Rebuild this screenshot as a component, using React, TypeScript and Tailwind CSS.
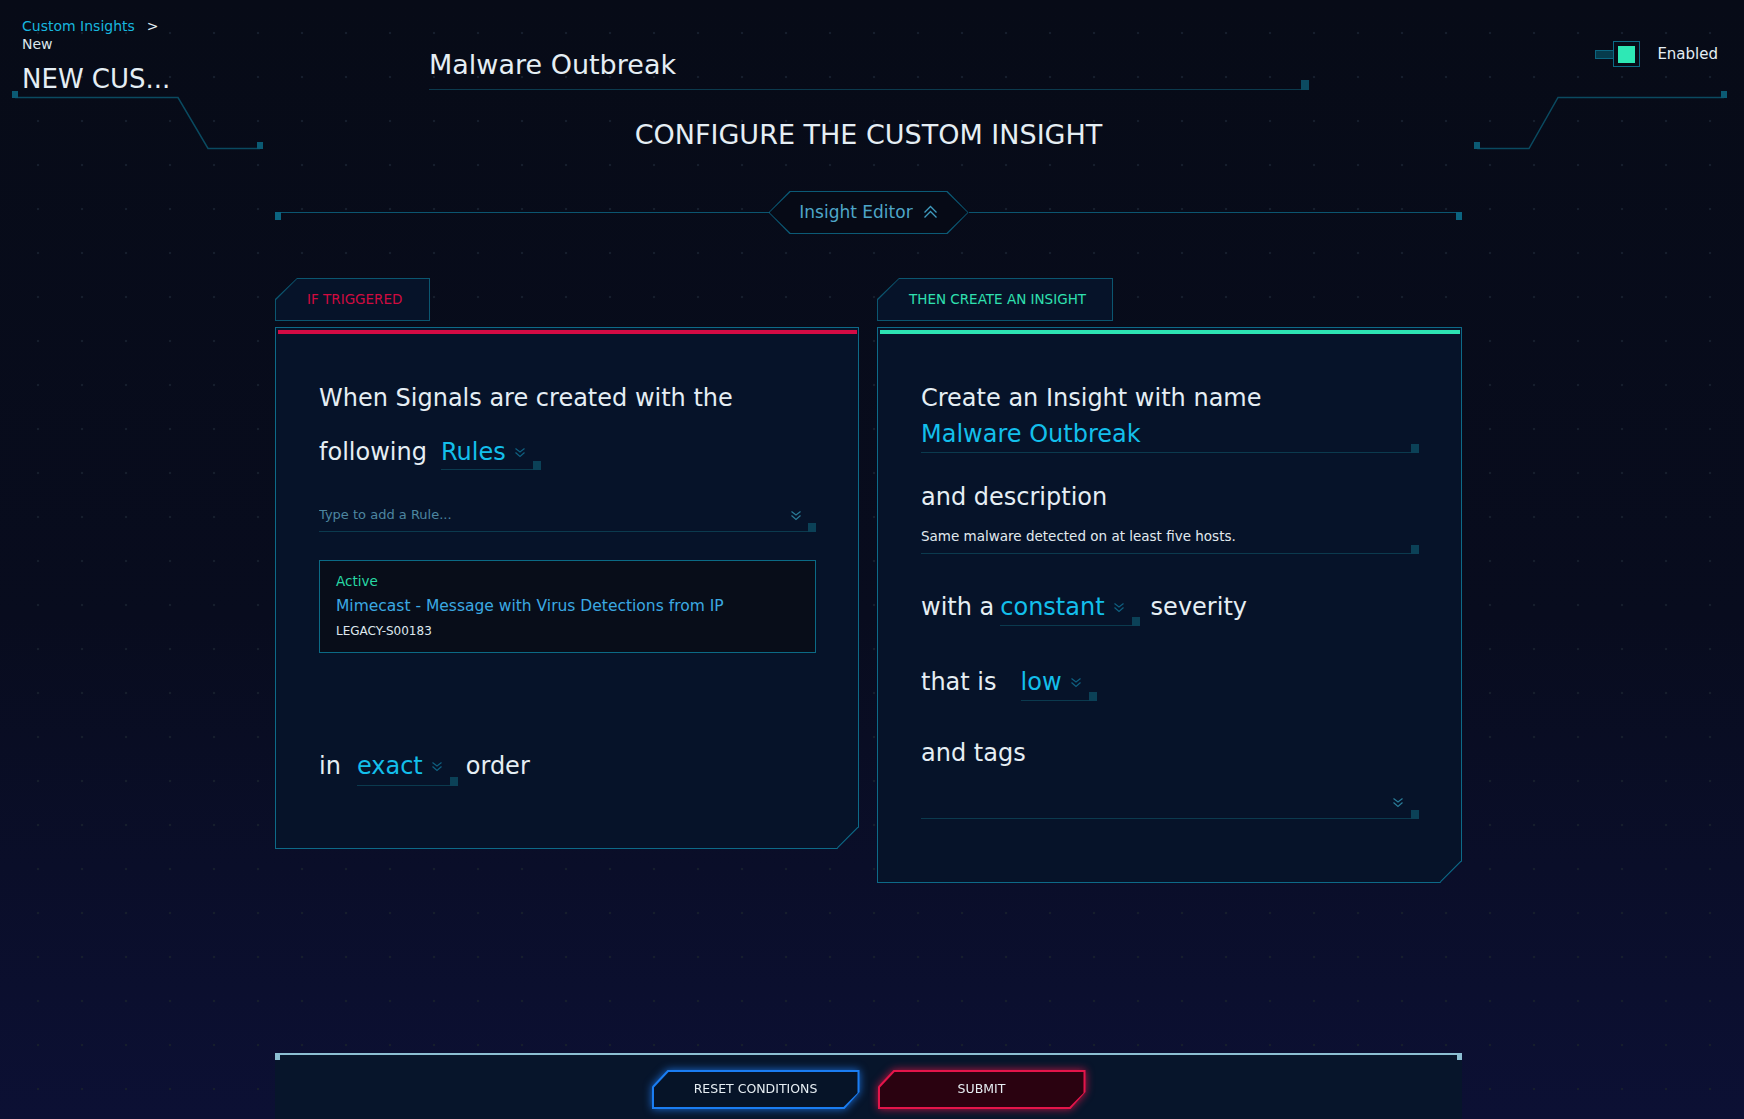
import type { ReactNode } from 'react'

const TEXT = 'text-[#e5eef4]'

function Chevrons({ className = '' }: { className?: string }) {
  return (
    <svg width="12" height="11" viewBox="0 0 12 11" fill="none" className={className}>
      <path d="M1.5 1.5 L6 5 L10.5 1.5" stroke="currentColor" strokeWidth="1.2" />
      <path d="M1.5 5.5 L6 9.5 L10.5 5.5" stroke="currentColor" strokeWidth="1.2" />
    </svg>
  )
}

function Select({ value, className = '', pb = 'pb-[6px]' }: { value: string; className?: string; pb?: string }) {
  return (
    <span className={`relative inline-flex items-end border-b border-[#0b3a4e] pr-[15px] align-baseline ${pb} ${className}`}>
      <span className="leading-[24px] text-[#13bfeb]">{value}</span>
      <Chevrons className="ml-2 mb-[6px] text-[#0f6080]" />
      <span className="absolute right-0 bottom-[-1px] w-2 h-[9px] bg-[#0b4157]" />
    </span>
  )
}

function Tab({ label, color, width }: { label: string; color: string; width: string }) {
  return (
    <div className={`${width} h-[43px] bg-[#0b5670] p-px [clip-path:polygon(22px_0,100%_0,100%_100%,0_100%,0_21px)]`}>
      <div className={`h-full bg-[#061329] flex items-center pl-[31px] text-[13.5px] ${color} [clip-path:polygon(21px_0,100%_0,100%_100%,0_100%,0_21px)]`}>
        {label}
      </div>
    </div>
  )
}

function Panel({ width, height, bar, children }: { width: string; height: string; bar: string; children: ReactNode }) {
  return (
    <div className={`relative ${width} ${height} mt-[6px] border border-[#0d6a88] bg-[#061329] [clip-path:polygon(0_0,100%_0,100%_calc(100%_-_22px),calc(100%_-_22px)_100%,0_100%)]`}>
      <div className={`ml-[2px] mr-px mt-[2px] h-[4px] ${bar}`} />
      {children}
      <svg className="absolute -right-px -bottom-px" width="22" height="22" viewBox="0 0 22 22" fill="none">
        <path d="M22 0 L0 22" stroke="#0d6a88" strokeWidth="2.2" />
      </svg>
    </div>
  )
}

function Field({ children, className = '' }: { children?: ReactNode; className?: string }) {
  return (
    <div className={`relative flex items-start border-b border-[#0b3a4e] ${className}`}>
      {children}
      <span className="absolute right-0 bottom-[-1px] w-2 h-[9px] bg-[#0b4157]" />
    </div>
  )
}

function CutButton({ label, border, bg, glow }: { label: string; border: string; bg: string; glow: string }) {
  return (
    <div className={glow}>
      <div className={`w-[208px] h-[39px] p-[2px] ${border} [clip-path:polygon(16px_0,100%_0,100%_22px,calc(100%_-_15px)_100%,0_100%,0_17px)]`}>
        <div className={`h-full ${bg} flex items-center justify-center text-[12.5px] text-[#e6eef3] [clip-path:polygon(15px_0,100%_0,100%_21px,calc(100%_-_14px)_100%,0_100%,0_16px)]`}>
          {label}
        </div>
      </div>
    </div>
  )
}

export default function App() {
  return (
    <div className="relative min-h-screen flex flex-col font-['DejaVu_Sans',sans-serif] [background-image:radial-gradient(circle_at_center,#161e2d_1px,transparent_1.6px),linear-gradient(180deg,#070b17_0%,#080c1e_55%,#0c1034_100%)] [background-size:44px_44px,100%_100%] [background-position:16px_11px,0_0]">
      {/* corner decorations */}
      <svg className="absolute left-0 top-0" width="270" height="160" fill="none">
        <path d="M15 97.5 H178 L208 148.5 H260" stroke="#0a4a60" strokeWidth="1.5" />
        <rect x="12" y="91" width="6" height="7" fill="#0b5a73" />
        <rect x="257" y="142" width="6" height="7" fill="#0b5a73" />
      </svg>
      <svg className="absolute right-0 top-0" width="304" height="160" fill="none">
        <path d="M37 148.5 H89 L118 97.5 H284" stroke="#0a4a60" strokeWidth="1.5" />
        <rect x="34" y="142" width="6" height="7" fill="#0b5a73" />
        <rect x="281" y="91" width="6" height="7" fill="#0b5a73" />
      </svg>

      <header className="relative flex items-start">
        <div className="w-[429px] shrink-0 pl-[22px] pt-[17px]">
          <div className="text-[14px] leading-[18px]">
            <span className="text-[#17b6df]">Custom Insights</span>
            <span className={`ml-3 ${TEXT}`}>&gt;</span>
          </div>
          <div className="text-[14px] leading-[18px] text-[#dbe6ec]">New</div>
          <div className={`mt-[10px] text-[26px] leading-[32px] ${TEXT}`}>NEW CUS...</div>
        </div>
        <div className="w-[880px] shrink-0 pt-[47px]">
          <div className={`relative border-b border-[#0c3a4d] pb-[6px] text-[27px] leading-[36px] ${TEXT}`}>
            Malware Outbreak
            <span className="absolute right-0 bottom-[-1px] w-2 h-[10px] bg-[#0b4a60]" />
          </div>
        </div>
        <div className="flex-1 flex justify-end items-center pr-[26px] pt-[41px]">
          <div className="w-[18px] h-[9px] bg-[#063b4c] border border-r-0 border-[#0b6580]" />
          <div className="w-[27px] h-[26px] border border-[#0b6a85] flex items-center justify-center">
            <div className="w-[17px] h-[17px] bg-[#2ee8b5]" />
          </div>
          <span className={`ml-[17px] text-[15px] leading-[18px] ${TEXT}`}>Enabled</span>
        </div>
      </header>

      <main className="ml-[275px] w-[1187px] flex-1 flex flex-col">
        <h1 className={`mt-[22px] text-center text-[27px] leading-[36px] ${TEXT}`}>CONFIGURE THE CUSTOM INSIGHT</h1>

        <div className="mt-[38px] flex items-start h-[43px]">
          <div className="flex-1 flex items-start mt-[21px]">
            <div className="w-[6px] h-[8px] bg-[#0b6480]" />
            <div className="flex-1 h-px bg-[#0b5570]" />
          </div>
          <div className="w-[200px] h-[43px] bg-[#0b5a76] p-px [clip-path:polygon(21px_0,calc(100%_-_21px)_0,100%_50%,calc(100%_-_21px)_100%,21px_100%,0_50%)]">
            <div className="h-full bg-[#060a16] flex items-center justify-center gap-[10px] pb-[2px] [clip-path:polygon(21px_0,calc(100%_-_21px)_0,100%_50%,calc(100%_-_21px)_100%,21px_100%,0_50%)]">
              <span className="text-[17px] leading-[20px] text-[#4ea6c8]">Insight Editor</span>
              <svg width="15" height="14" viewBox="0 0 15 14" fill="none">
                <path d="M1.5 7.5 L7.5 1.5 L13.5 7.5" stroke="#3f9bbf" strokeWidth="1.3" />
                <path d="M1.5 12.5 L7.5 6.5 L13.5 12.5" stroke="#3f9bbf" strokeWidth="1.3" />
              </svg>
            </div>
          </div>
          <div className="flex-1 flex items-start mt-[21px]">
            <div className="flex-1 h-px bg-[#0b5570]" />
            <div className="w-[6px] h-[8px] bg-[#0b6480]" />
          </div>
        </div>

        <div className="mt-[44px] flex items-start gap-[18px]">
          {/* IF TRIGGERED */}
          <div className="w-[584px]">
            <Tab label="IF TRIGGERED" color="text-[#d00b40]" width="w-[155px]" />
            <Panel width="w-[584px]" height="h-[522px]" bar="bg-[#d30b44]">
              <div className={`pl-[43px] pr-[42px] pt-[37px] text-[24px] ${TEXT}`}>
                <div className="leading-[54px]">When Signals are created with the</div>
                <div className="leading-[54px]">following<Select value="Rules" className="ml-[14px]" pb="pb-[5px]" /></div>
                <Field className="mt-[25px] h-[28px]">
                  <input
                    placeholder="Type to add a Rule..."
                    className="flex-1 bg-transparent outline-none pt-px text-[13px] leading-[20px] text-[#c9d6de] placeholder:text-[#4d86a0]"
                  />
                  <Chevrons className="mt-[6px] mr-[14px] text-[#2a7b97]" />
                </Field>
                <div className="mt-[28px] h-[93px] border border-[#0b6a85] bg-[#080d19] pl-4 pt-[11px]">
                  <div className="text-[13.5px] leading-[18px] text-[#27d9a4]">Active</div>
                  <div className="mt-[3px] text-[15.5px] leading-[26px] text-[#3ba9e2]">Mimecast - Message with Virus Detections from IP</div>
                  <div className="mt-[3px] text-[12px] leading-[18px] text-[#dfe8ee]">LEGACY-S00183</div>
                </div>
                <div className="mt-[86px] leading-[54px]">in<Select value="exact" className="ml-[16px]" pb="pb-[7px]" /><span className="ml-[8px]">order</span></div>
              </div>
            </Panel>
          </div>

          {/* THEN CREATE AN INSIGHT */}
          <div className="w-[585px]">
            <Tab label="THEN CREATE AN INSIGHT" color="text-[#2fe0b0]" width="w-[236px]" />
            <Panel width="w-[585px]" height="h-[556px]" bar="bg-[#2de3b3]">
              <div className={`pl-[43px] pr-[42px] pt-[46px] text-[24px] ${TEXT}`}>
                <div className="leading-[36px]">Create an Insight with name</div>
                <div className="relative border-b border-[#0b3a4e] leading-[36px] text-[#13bfeb]">
                  Malware Outbreak
                  <span className="absolute right-0 bottom-[-1px] w-2 h-[9px] bg-[#0b4157]" />
                </div>
                <div className="mt-[26px] leading-[36px]">and description</div>
                <div className="relative mt-[11px] border-b border-[#0b3a4e] pb-[7px] text-[13.5px] leading-[20px] text-[#e1eaef]">
                  Same malware detected on at least five hosts.
                  <span className="absolute right-0 bottom-[-1px] w-2 h-[9px] bg-[#0b4157]" />
                </div>
                <div className="mt-[35px] leading-[36px]">with a<Select value="constant" className="ml-[6px]" /><span className="ml-[11px]">severity</span></div>
                <div className="mt-[38px] leading-[36px]">that is<Select value="low" className="ml-[24px]" /></div>
                <div className="mt-[34px] leading-[36px]">and tags</div>
                <Field className="mt-[18px] h-[30px] justify-end">
                  <Chevrons className="mt-[8px] mr-[15px] text-[#2a7b97]" />
                </Field>
              </div>
            </Panel>
          </div>
        </div>

        <footer className="mt-auto bg-[#07152b] pb-[10px]">
          <div className="h-[7px] border-t-2 border-x-[5px] border-[#8cbfd2]" />
          <div className="mt-[10px] flex justify-center gap-[18px]">
            <CutButton label="RESET CONDITIONS" border="bg-[#1a7df2]" bg="bg-[#061428]" glow="drop-shadow-[0_0_4px_rgba(30,130,255,0.8)]" />
            <CutButton label="SUBMIT" border="bg-[#e3154a]" bg="bg-[#2a0210]" glow="drop-shadow-[0_0_4px_rgba(235,20,70,0.8)]" />
          </div>
        </footer>
      </main>
    </div>
  )
}
